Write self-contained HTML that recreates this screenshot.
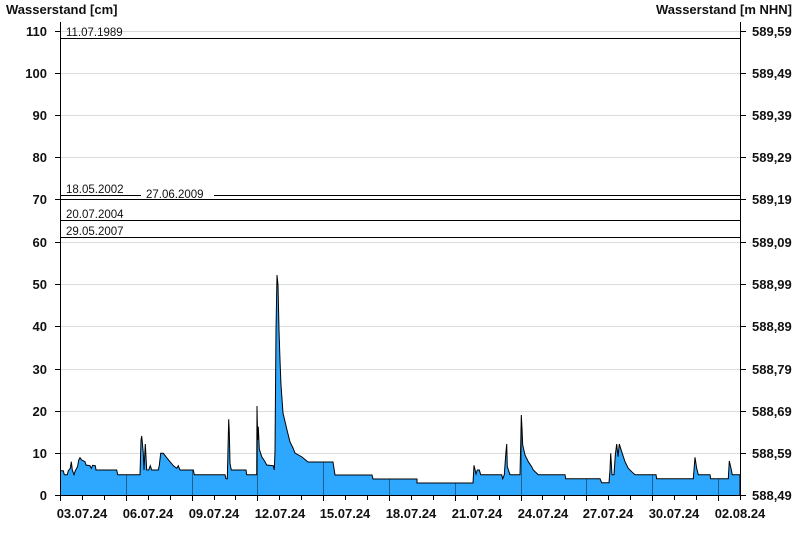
<!DOCTYPE html>
<html><head><meta charset="utf-8"><style>
html,body{margin:0;padding:0;background:#fff;}
svg{display:block;font-family:"Liberation Sans",Arial,sans-serif;}
.b{font-weight:bold;font-size:13px;fill:#111;}
.t{font-size:11.5px;fill:#111;}
</style></head><body>
<svg width="800" height="550" viewBox="0 0 800 550" xmlns="http://www.w3.org/2000/svg">
<defs>
<clipPath id="c"><path id="dp" d="M60.5,495.5 L60.5,470.7 L63.3,470.7 L64.3,474.7 L67.3,474.7 L68.3,470.7 L70.3,468.3 L71.3,461.7 L72.3,470 L74,474.7 L75.3,470.7 L76.7,468.3 L77.7,466 L78.7,460 L80,457.7 L81.7,460 L85,461.7 L86,465 L90,465.7 L91.3,468.3 L92.7,465.3 L95.3,465.7 L96,470 L116.7,470 L117.7,474.7 L140,474.7 L141,440.3 L141.7,436 L143.3,453.3 L144,470 L145.3,444 L146.7,470 L148.7,470 L150.3,465.7 L151.7,470 L158.3,470 L159.3,465.3 L160.7,453.3 L163.3,453.3 L166.7,457.7 L170,461.7 L173.3,465.7 L176.7,468.3 L178.3,465.7 L180,470 L193.3,470 L194.3,474.7 L225,474.7 L226,478.7 L227.3,478.7 L228,449 L228.7,419.3 L229.3,432 L230,463.3 L231.3,470 L246,470 L246.7,474.7 L256.7,474.7 L257,406 L257.7,440 L258.3,426.7 L259.3,449 L261.7,456.7 L265,461.7 L266.7,465 L273.3,465.7 L274.3,470 L275,451 L276,330 L277,275 L278,285 L279,330 L280,360 L281,385 L283,413 L287,430 L290,442 L293,448 L295,453 L302,457 L308,462 L333,462 L335,475 L372,475 L373,479 L417,479 L417,483 L473,483 L474,465.3 L476,474 L477.3,470 L479.3,470 L480.7,474.7 L501.7,474.7 L502.7,478.7 L504.3,474.7 L505.7,455 L506.7,444 L507.3,466.7 L510,474.7 L520,474.7 L520.7,445 L521.3,415 L522,428.3 L522.7,445 L525,455 L528.3,461.7 L531.7,466.7 L533.3,470 L538.3,474.7 L565,474.7 L565.7,478.7 L600,478.7 L601.7,482.7 L609,482.7 L610,470 L610.7,453.3 L612,474.7 L614,474.7 L615.3,455 L616.7,444 L618,456.7 L619.3,444 L621.7,451.7 L625,461.7 L628.3,468.3 L631.7,471.7 L635,474.7 L656,474.7 L656.7,478.7 L693.3,478.7 L695,457.3 L696.7,468.3 L698.3,474.7 L710,474.7 L710.7,478.7 L728.3,478.7 L729.3,461 L731,468.3 L732.3,474.7 L740,474.7 L740,495.5 Z"/></clipPath>
</defs>
<g stroke="#dcdcdc" stroke-width="1">
<line x1="61" x2="740" y1="453.5" y2="453.5"/><line x1="61" x2="740" y1="411.5" y2="411.5"/><line x1="61" x2="740" y1="369.5" y2="369.5"/><line x1="61" x2="740" y1="326.5" y2="326.5"/><line x1="61" x2="740" y1="284.5" y2="284.5"/><line x1="61" x2="740" y1="242.5" y2="242.5"/><line x1="61" x2="740" y1="157.5" y2="157.5"/><line x1="61" x2="740" y1="115.5" y2="115.5"/><line x1="61" x2="740" y1="73.5" y2="73.5"/><line x1="61" x2="740" y1="31.5" y2="31.5"/>
</g>
<use href="#dp" fill="#2ea8ff"/>
<g clip-path="url(#c)" stroke="#1d5f8f" stroke-width="1">
<line x1="126.5" x2="126.5" y1="400" y2="496"/><line x1="192.5" x2="192.5" y1="400" y2="496"/><line x1="257.5" x2="257.5" y1="400" y2="496"/><line x1="323.5" x2="323.5" y1="400" y2="496"/><line x1="389.5" x2="389.5" y1="400" y2="496"/><line x1="455.5" x2="455.5" y1="400" y2="496"/><line x1="521.5" x2="521.5" y1="400" y2="496"/><line x1="586.5" x2="586.5" y1="400" y2="496"/><line x1="652.5" x2="652.5" y1="400" y2="496"/><line x1="718.5" x2="718.5" y1="400" y2="496"/>
</g>
<use href="#dp" fill="none" stroke="#000" stroke-width="1"/>
<g stroke="#000" stroke-width="1">
<line x1="60" x2="740" y1="38.5" y2="38.5"/>
<line x1="60" x2="141" y1="195.5" y2="195.5"/><line x1="214" x2="740" y1="195.5" y2="195.5"/>
<line x1="60" x2="740" y1="199.5" y2="199.5"/>
<line x1="60" x2="740" y1="220.5" y2="220.5"/>
<line x1="60" x2="740" y1="237.5" y2="237.5"/>
<line x1="60.5" x2="60.5" y1="22" y2="500"/>
<line x1="740.5" x2="740.5" y1="22" y2="500"/>
<line x1="55" x2="741" y1="495.5" y2="495.5"/>
</g>
<g stroke="#000">
<path d="M55 453.5h5M55 411.5h5M55 369.5h5M55 326.5h5M55 284.5h5M55 242.5h5M55 199.5h5M55 157.5h5M55 115.5h5M55 73.5h5M55 31.5h5"/>
<path d="M741 495.5h5M741 453.5h5M741 411.5h5M741 369.5h5M741 326.5h5M741 284.5h5M741 242.5h5M741 199.5h5M741 157.5h5M741 115.5h5M741 73.5h5M741 31.5h5"/>
<path d="M60.5 496v5M82.5 496v4M104.5 496v4M126.5 496v5M148.5 496v4M170.5 496v4M192.5 496v5M214.5 496v4M235.5 496v4M257.5 496v5M279.5 496v4M301.5 496v4M323.5 496v5M345.5 496v4M367.5 496v4M389.5 496v5M411.5 496v4M433.5 496v4M455.5 496v5M477.5 496v4M499.5 496v4M521.5 496v5M542.5 496v4M564.5 496v4M586.5 496v5M608.5 496v4M630.5 496v4M652.5 496v5M674.5 496v4M696.5 496v4M718.5 496v5M740.5 496v4"/>
</g>
<text class="b" x="6" y="14">Wasserstand [cm]</text>
<text class="b" x="792" y="14" text-anchor="end">Wasserstand [m NHN]</text>
<g class="b" text-anchor="end">
<text x="47" y="500">0</text><text x="47" y="458">10</text><text x="47" y="416">20</text><text x="47" y="374">30</text><text x="47" y="331">40</text><text x="47" y="289">50</text><text x="47" y="247">60</text><text x="47" y="204">70</text><text x="47" y="162">80</text><text x="47" y="120">90</text><text x="47" y="78">100</text><text x="47" y="36">110</text>
</g>
<g class="b">
<text x="752" y="500">588,49</text><text x="752" y="458">588,59</text><text x="752" y="416">588,69</text><text x="752" y="374">588,79</text><text x="752" y="331">588,89</text><text x="752" y="289">588,99</text><text x="752" y="247">589,09</text><text x="752" y="204">589,19</text><text x="752" y="162">589,29</text><text x="752" y="120">589,39</text><text x="752" y="78">589,49</text><text x="752" y="36">589,59</text>
</g>
<g class="b" text-anchor="middle">
<text x="82" y="518">03.07.24</text><text x="148" y="518">06.07.24</text><text x="214" y="518">09.07.24</text><text x="280" y="518">12.07.24</text><text x="345" y="518">15.07.24</text><text x="411" y="518">18.07.24</text><text x="477" y="518">21.07.24</text><text x="543" y="518">24.07.24</text><text x="608" y="518">27.07.24</text><text x="674" y="518">30.07.24</text><text x="740" y="518">02.08.24</text>
</g>
<g class="t">
<text x="66" y="36">11.07.1989</text>
<text x="66" y="193">18.05.2002</text>
<text x="146" y="198">27.06.2009</text>
<text x="66" y="218">20.07.2004</text>
<text x="66" y="235">29.05.2007</text>
</g>
</svg>
</body></html>
